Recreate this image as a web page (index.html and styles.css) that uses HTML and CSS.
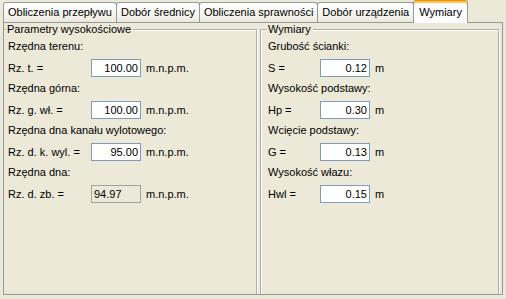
FILE: index.html
```html
<!DOCTYPE html>
<html lang="pl">
<head>
<meta charset="utf-8">
<title>Wymiary</title>
<link rel="stylesheet" href="styles.css">
</head>
<body>
<div class="tabctl">
  <div class="tabstrip">
    <div class="tab">Obliczenia przepływu</div>
    <div class="tab">Dobór średnicy</div>
    <div class="tab">Obliczenia sprawności</div>
    <div class="tab">Dobór urządzenia</div>
    <div class="tab active">Wymiary</div>
  </div>
  <div class="panel">
    <fieldset class="group group-left">
      <legend>Parametry wysokościowe</legend>
      <div class="rows">
        <div class="caption">Rzędna terenu:</div>
        <div class="row"><span class="lbl">Rz. t. =</span><span class="field">100.00</span><span class="unit">m.n.p.m.</span></div>
        <div class="caption">Rzędna górna:</div>
        <div class="row"><span class="lbl">Rz. g. wł. =</span><span class="field">100.00</span><span class="unit">m.n.p.m.</span></div>
        <div class="caption">Rzędna dna kanału wylotowego:</div>
        <div class="row"><span class="lbl">Rz. d. k. wyl. =</span><span class="field">95.00</span><span class="unit">m.n.p.m.</span></div>
        <div class="caption">Rzędna dna:</div>
        <div class="row"><span class="lbl">Rz. d. zb. =</span><span class="field readonly">94.97</span><span class="unit">m.n.p.m.</span></div>
      </div>
    </fieldset>
    <fieldset class="group group-right">
      <legend>Wymiary</legend>
      <div class="rows">
        <div class="caption">Grubość ścianki:</div>
        <div class="row"><span class="lbl">S =</span><span class="field">0.12</span><span class="unit">m</span></div>
        <div class="caption">Wysokość podstawy:</div>
        <div class="row"><span class="lbl">Hp =</span><span class="field">0.30</span><span class="unit">m</span></div>
        <div class="caption">Wcięcie podstawy:</div>
        <div class="row"><span class="lbl">G =</span><span class="field">0.13</span><span class="unit">m</span></div>
        <div class="caption">Wysokość włazu:</div>
        <div class="row"><span class="lbl">Hwl =</span><span class="field">0.15</span><span class="unit">m</span></div>
      </div>
    </fieldset>
  </div>
</div>
</body>
</html>
```
FILE: styles.css
```css
html, body {
  margin: 0;
  padding: 0;
  background: #ECE9D8;
}
body {
  font-family: "Liberation Sans", Arial, sans-serif;
  font-size: 11px;
  color: #000;
  width: 506px;
  height: 299px;
  overflow: hidden;
}
.tabctl {
  padding-left: 3px;
  width: 500px;
}
.tabstrip {
  display: flex;
  align-items: flex-end;
  height: 22px;
}
.tab {
  position: relative;
  height: 19px;
  line-height: 19px;
  padding: 0 4px;
  border: 1px solid #919B9C;
  border-bottom: none;
  border-radius: 3px 3px 0 0;
  background: linear-gradient(#FFFFFF, #F3F2EC 70%, #EAE8DD);
  white-space: nowrap;
  margin-right: -1px;
}
.tab.active {
  z-index: 2;
  line-height: 18px;
  margin-bottom: -1px;
  border-top: 1px solid #E68B2C;
  box-shadow: inset 0 2px 0 #FFC73C;
  background: #FCFCFE;
  padding: 2px 5px 0 5px;
  box-sizing: border-box;
  height: 23px;
}
.panel {
  position: relative;
  z-index: 1;
  height: 271px;
  border: 1px solid #919B9C;
  display: flex;
  gap: 2px;
  padding: 0 2px 0 0;
  background: #ECE9D8;
}
.group {
  margin: 0;
  padding: 0;
  border: 2px groove #FFFFFF;
  border-bottom: none;
  min-width: 0;
  box-sizing: border-box;
}
.group legend {
  padding: 0 2px 0 1px;
  line-height: 13px;
  margin-top: 1px;
}
.group-left {
  width: 254px;
  border-left: none;
}
.group-left legend {
  margin-left: 2px;
}
.group-right {
  flex: 1;
}
.group-right legend {
  margin-left: 5px;
}
.rows {
  display: flex;
  flex-direction: column;
}
.group-left .rows {
  padding-left: 4px;
}
.group-right .rows {
  padding-left: 6px;
}
.caption {
  height: 21px;
  line-height: 21px;
  white-space: nowrap;
}
.row {
  display: grid;
  align-items: center;
  height: 21px;
  column-gap: 5px;
  white-space: nowrap;
}
.group-left .row {
  grid-template-columns: 78px 50px auto;
}
.group-right .row {
  grid-template-columns: 47px 50px auto;
}
.field {
  box-sizing: border-box;
  height: 18px;
  line-height: 16px;
  border: 1px solid #7F9DB9;
  background: #FFFFFF;
  text-align: right;
  padding: 0 2px;
}
.field.readonly {
  background: #ECE9D8;
  border-color: #9DA3A8;
  text-align: left;
}
```
